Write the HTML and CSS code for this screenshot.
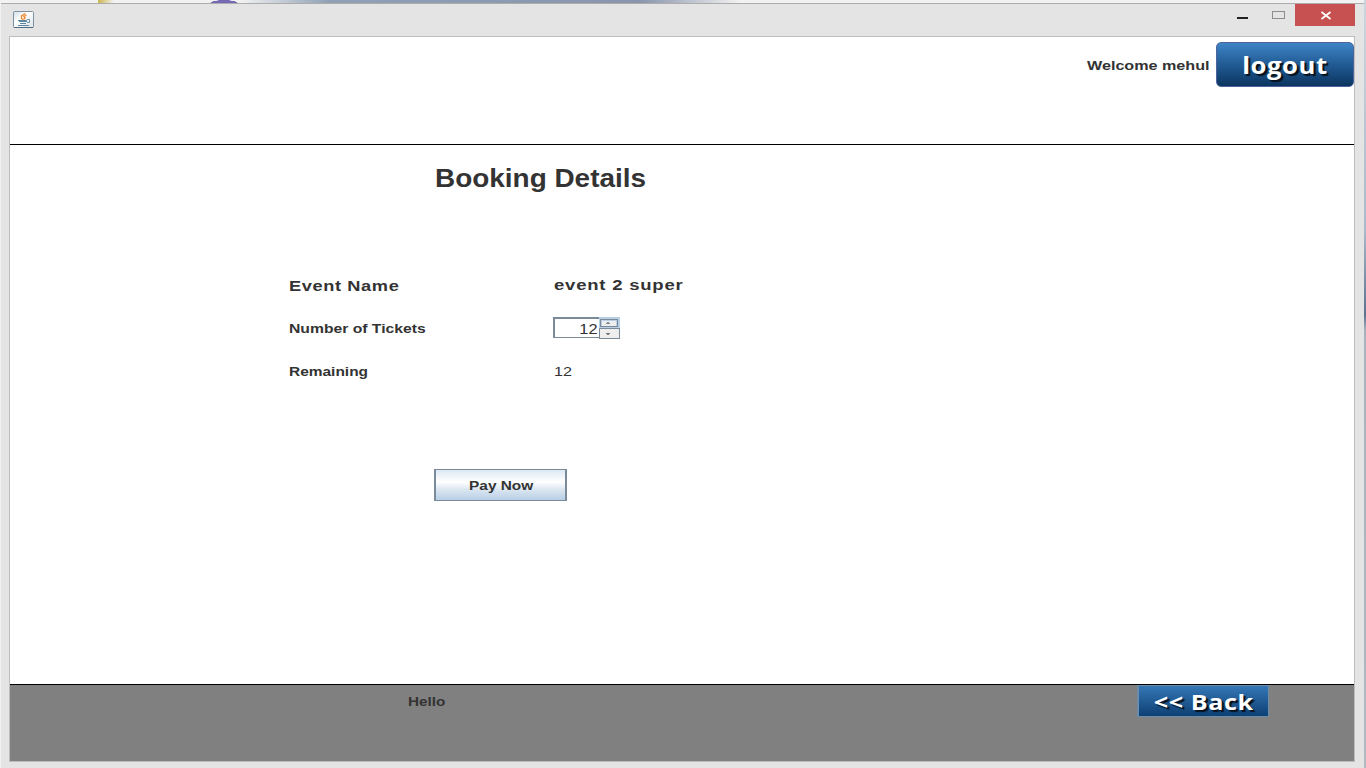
FILE: index.html
```html
<!DOCTYPE html>
<html lang="en">
<head>
<meta charset="utf-8">
<title>Booking Details</title>
<link rel="stylesheet" href="styles.css">
</head>
<body>
<div class="desktop">
  <div class="window">
    <div class="titlebar">
      <svg class="java-icon" width="21" height="17" viewBox="0 0 21 17">
        <defs><linearGradient id="jb" x1="0" y1="0" x2="1" y2="1"><stop offset="0" stop-color="#d3dde5"/><stop offset=".4" stop-color="#fff"/><stop offset="1" stop-color="#dde3e8"/></linearGradient></defs>
        <rect x=".5" y=".5" width="20" height="16" rx="1" fill="url(#jb)" stroke="#7c93a3"/>
        <path d="M1 16.500H20" stroke="#4e6b82"/>
        <path d="M12.500 2.500L8.500 5L8.500 7.500L10 8.500M13.500 4L11 5.500L12 7L10.500 8.500" fill="none" stroke="#ec8a32" stroke-width="1.400"/>
        <path d="M5 9.500H14M6 10.500H14M7 12.500H13M5 14.500H16" stroke="#5d859f" stroke-width="1.200"/>
        <path d="M14 8.500H16.500V11.500H14" fill="none" stroke="#6d91a8"/>
      </svg>
      <div class="controls">
        <svg width="120" height="22" viewBox="0 0 120 22">
          <rect x="2" y="13" width="11" height="2" fill="#222"/>
          <rect x="37.500" y="7.500" width="12" height="7" fill="none" stroke="#8e8e8e"/>
          <rect x="60" width="60" height="22" fill="#c75050"/>
          <path d="M86.500 8L95.500 15M95.500 8L86.500 15" stroke="#fff" stroke-width="1.800"/>
        </svg>
      </div>
    </div>
    <div class="content">
      <header class="header">
        <span class="label welcome">Welcome mehul</span>
        <button class="logout"><span>logout</span></button>
      </header>
      <main class="main">
        <h1 class="title"><span>Booking Details</span></h1>
        <div class="form">
          <span class="label event-label">Event Name</span>
          <span class="label event-value">event 2 super</span>
          <span class="label tickets">Number of Tickets</span>
          <div class="spinner">
            <div class="field"><span>12</span></div>
            <svg width="21" height="22" viewBox="0 0 21 22">
              <rect width="21" height="11" fill="#b8cfe5"/>
              <rect x="1.500" y="2.500" width="17" height="7" fill="#eee" stroke="#7a8a99"/>
              <path d="M2.500 9V3.500H17.500V9" fill="none" stroke="#b8cfe5"/>
              <path d="M8 5h2v1h1v1H7V6h1z" fill="#7a8a99"/>
              <rect x=".5" y="11.500" width="20" height="10" fill="#eee" stroke="#7a8a99"/>
              <path d="M7 16h4v1h-1v1H8v-1H7z" fill="#777"/>
            </svg>
          </div>
          <span class="label remaining">Remaining</span>
          <span class="label count">12</span>
        </div>
        <button class="pay"><span class="label">Pay Now</span></button>
      </main>
      <footer class="footer">
        <span class="label hello">Hello</span>
        <button class="back"><span>&lt;&lt; Back</span></button>
      </footer>
    </div>
  </div>
</div>
</body>
</html>
```
FILE: styles.css
```css
* { box-sizing: border-box; }
body { margin: 0; overflow: hidden; font-family: "Liberation Sans", Arial, sans-serif; color: #333; }
button { margin: 0; padding: 0; border: 0; font: inherit; color: inherit; }
.desktop {
  width: 1366px; height: 768px; padding: 3px 2px 0 1px;
  background:
    radial-gradient(ellipse 14px 3px at 224px 3px, #7668b4 90%, transparent),
    linear-gradient(90deg, transparent 98px, #cdb54c 98px, transparent 114px) 0 0 / 100% 3px no-repeat,
    linear-gradient(90deg, transparent 240px, #8fa0b5 330px, #8995ac 640px, transparent 740px) 0 0 / 100% 3px no-repeat,
    linear-gradient(#cbd6df, #aab9c8 30%, #5c7090 41%, #a6b2bd 43%, #aeb9c2) right / 2px 100% no-repeat,
    #f2f2f2;
}
.window { height: 765px; padding: 0 9px 6px 8px; background: #e4e4e4; border-top: 1px solid #acacac; display: flex; flex-direction: column; }
.titlebar { height: 32px; display: flex; justify-content: space-between; flex: none; }
.java-icon { margin: 7px 0 0 4px; }
.controls svg { display: block; }
.content { height: 726px; border: 1px solid #bdbdbd; background: #fff; display: flex; flex-direction: column; }
.label { display: inline-block; font-size: 13.5px; line-height: 18px; font-weight: bold; white-space: nowrap; transform-origin: left center; justify-self: start; }
.header { height: 108px; border-bottom: 1px solid #000; display: flex; justify-content: flex-end; align-items: flex-start; padding-top: 5px; }
.welcome { width: 129px; margin-top: 15px; transform: scaleX(1.195); }
.logout {
  width: 138px; height: 45px; border: 1px solid #4d659c; border-radius: 5px;
  background: linear-gradient(#3e84c6, #215b94 50%, #0b3560);
}
.logout span, .back span {
  display: inline-block; font-family: "Open Sans", sans-serif; font-weight: bold; color: #fff;
  text-shadow: 2px 2px 1px #07111c; white-space: nowrap;
}
.logout span { font-size: 24px; line-height: 41px; letter-spacing: .5px; transform: scaleX(1.07); }
.main { height: 540px; border-bottom: 1px solid #000; flex: none; }
.title { margin: 0; padding: 18px 0 0 425px; font-size: 25px; line-height: 30px; }
.title span { display: inline-block; transform: scaleX(1.117); transform-origin: left; }
.form { padding: 71px 0 0 279px; display: grid; grid-template-columns: 264px auto; grid-template-rows: 43px 43px 43px; align-items: center; height: 256px; align-content: start; }
.event-label { font-size: 15px; letter-spacing: .5px; transform: scaleX(1.215); }
.event-value { font-size: 14px; letter-spacing: .6px; margin-left: 1px; margin-top: -2px; transform: scaleX(1.32); }
.tickets { transform: scaleX(1.163); }
.remaining { transform: scaleX(1.145); }
.count { font-weight: normal; margin-left: 1px; transform: scaleX(1.2); }
.spinner { display: flex; align-items: flex-start; margin-bottom: 2px; }
.field { width: 46px; height: 21px; border: 2px solid #7a8a99; border-width: 2px 0 1px 2px; text-align: right; font-size: 14px; line-height: 20px; padding-right: 1px; }
.field span { display: inline-block; transform: scaleX(1.17); transform-origin: right; }
.pay { display: block; width: 133px; height: 32px; margin: 20px 0 0 424px; border: 1px solid #7a8a99; border-width: 1px 2px; background: linear-gradient(#dde8f3, #fff 40%, #dbe6f1 65%, #b8cfe5); }
.pay .label { margin-left: 2px; transform: scaleX(1.14); transform-origin: center; }
.footer { height: 76px; background: #808080; display: flex; justify-content: space-between; align-items: flex-start; padding: 0 85px 0 398px; }
.hello { margin-top: 8px; transform: scaleX(1.13); }
.back { width: 132px; height: 32px; border: 1px solid #6c8daa; border-left-width: 2px; background: linear-gradient(#3577b6, #0d4073) padding-box; }
.back span { font-size: 22px; line-height: 29px; letter-spacing: .5px; transform: scaleX(1.145); }
```
